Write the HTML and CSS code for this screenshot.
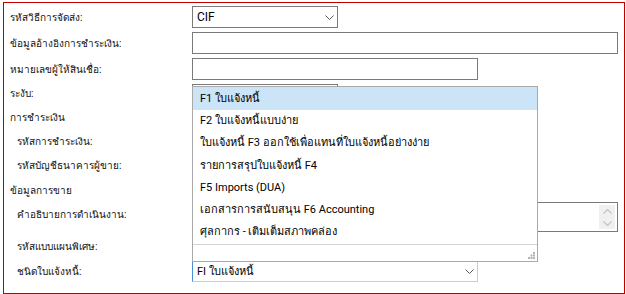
FILE: index.html
```html
<!DOCTYPE html>
<html lang="th">
<head>
    <meta charset="UTF-8">
    <title>Invoice settings</title>
    <link rel="stylesheet" href="styles.css">
</head>
<body>
    <div class="panel">
        <div class="form">
            <div class="lbl r1">รหัสวิธีการจัดส่ง:</div>
            <div class="ctl r1">
                <div class="select w-s"><span>CIF</span>
                    <svg class="chev" width="9" height="5" viewBox="0 0 9 5"><path d="M0.5 0.5 L4.5 4.5 L8.5 0.5" fill="none" stroke="#555" stroke-width="1"/></svg>
                </div>
            </div>

            <div class="lbl r1">ข้อมูลอ้างอิงการชำระเงิน:</div>
            <div class="ctl r1"><div class="input w-l"></div></div>

            <div class="lbl r1">หมายเลขผู้ให้สินเชื่อ:</div>
            <div class="ctl r1"><div class="input w-m"></div></div>

            <div class="lbl r2">ระงับ:</div>
            <div class="ctl r2 top"><div class="input w-s"></div></div>

            <div class="lbl head r3">การชำระเงิน</div>
            <div class="ctl r3"></div>

            <div class="lbl sub r3">รหัสการชำระเงิน:</div>
            <div class="ctl r3"></div>

            <div class="lbl sub r4">รหัสบัญชีธนาคารผู้ขาย:</div>
            <div class="ctl r4"></div>

            <div class="lbl head r3">ข้อมูลการขาย</div>
            <div class="ctl r3"></div>

            <div class="lbl sub r5 toplbl">คำอธิบายการดำเนินงาน:</div>
            <div class="ctl r5 top">
                <div class="textarea w-l">
                    <div class="spin">
                        <svg width="9" height="5" viewBox="0 0 9 5"><path d="M0.5 4.5 L4.5 0.5 L8.5 4.5" fill="none" stroke="#c4c4c4" stroke-width="1.2"/></svg>
                        <svg width="9" height="5" viewBox="0 0 9 5"><path d="M0.5 0.5 L4.5 4.5 L8.5 0.5" fill="none" stroke="#c4c4c4" stroke-width="1.2"/></svg>
                    </div>
                </div>
            </div>

            <div class="lbl sub r3">รหัสแบบแผนพิเศษ:</div>
            <div class="ctl r3"></div>

            <div class="lbl sub r1">ชนิดใบแจ้งหนี้:</div>
            <div class="ctl r1">
                <div class="select focus w-m"><span>FI ใบแจ้งหนี้</span>
                    <svg class="chev" width="9" height="5" viewBox="0 0 9 5"><path d="M0.5 0.5 L4.5 4.5 L8.5 0.5" fill="none" stroke="#555" stroke-width="1"/></svg>
                </div>
            </div>
        </div>

        <div class="dropdown">
            <ul class="options">
                <li class="selected">F1 ใบแจ้งหนี้</li>
                <li>F2 ใบแจ้งหนี้แบบง่าย</li>
                <li>ใบแจ้งหนี้ F3 ออกใช้เพื่อแทนที่ใบแจ้งหนี้อย่างง่าย</li>
                <li>รายการสรุปใบแจ้งหนี้ F4</li>
                <li>F5 Imports (DUA)</li>
                <li>เอกสารการสนับสนุน F6 Accounting</li>
                <li>ศุลกากร - เติมเต็มสภาพคล่อง</li>
            </ul>
            <div class="grip-bar">
                <svg width="7" height="7" viewBox="0 0 7 7" fill="#b4b4b4">
                    <rect x="5" y="0" width="2" height="2"/>
                    <rect x="2.5" y="2.5" width="2" height="2"/>
                    <rect x="5" y="2.5" width="2" height="2"/>
                    <rect x="0" y="5" width="2" height="2"/>
                    <rect x="2.5" y="5" width="2" height="2"/>
                    <rect x="5" y="5" width="2" height="2"/>
                </svg>
            </div>
        </div>
    </div>
</body>
</html>
```

FILE: styles.css
```css
body {
    margin: 0;
    padding: 0;
    background-color: #fff;
    font-family: Roboto, "Noto Sans", sans-serif;
    font-size: 10px;
    color: #000;
}
.panel {
    position: relative;
    margin: 2px 0 0 3px;
    width: 620px;
    height: 289px;
    border: 1px solid #c00000;
    padding-top: 1px;
    box-sizing: content-box;
}
.form {
    display: grid;
    grid-template-columns: 188px 1fr;
}
.r1 { height: 26px; }
.r2 { height: 23px; }
.r3 { height: 24px; }
.r4 { height: 25px; }
.r5 { height: 32px; }
.lbl {
    display: flex;
    align-items: center;
    padding-left: 6px;
    white-space: nowrap;
    color: #111;
}
.lbl.sub {
    padding-left: 13px;
}
.lbl.toplbl {
    align-items: flex-start;
    padding-top: 5px;
    box-sizing: border-box;
}
.ctl {
    display: flex;
    align-items: center;
}
.ctl.top {
    align-items: flex-start;
    padding-top: 2px;
    box-sizing: border-box;
}
.ctl.r5 {
    padding-top: 0;
}
.w-s { width: 146px; }
.w-m { width: 286px; }
.w-l { width: 426px; }
.input, .select, .textarea {
    height: 22px;
    border: 1px solid #7a7a7a;
    box-sizing: border-box;
    background: #fff;
}
.select {
    display: flex;
    align-items: center;
    justify-content: space-between;
    padding: 0 3px 0 4px;
    font-size: 12px;
}
.select.focus {
    font-size: 11px;
    border-color: #4a8fd0 #b6d1ea #b6d1ea #4a8fd0;
}
.chev {
    display: block;
}
.textarea {
    height: 30px;
    display: flex;
    justify-content: flex-end;
    padding: 2px;
}
.spin {
    width: 16px;
    background: #f0f0f0;
    display: flex;
    flex-direction: column;
    align-items: center;
    justify-content: space-around;
}
.dropdown {
    position: absolute;
    left: 188px;
    top: 83px;
    width: 346px;
    height: 176px;
    border: 1px solid #a9a9a9;
    background: #fff;
    box-sizing: border-box;
    display: flex;
    flex-direction: column;
}
.options {
    list-style: none;
    margin: 0;
    padding: 0;
    flex: 1;
    border-bottom: 1px solid #d4d4d4;
}
.options li {
    height: 22.3px;
    line-height: 22px;
    padding-left: 7px;
    white-space: nowrap;
    font-size: 11px;
}
.options li.selected {
    background: #cce4f7;
    height: 23px;
    line-height: 24px;
}
.grip-bar {
    height: 18px;
    display: flex;
    justify-content: flex-end;
    align-items: flex-end;
    padding: 0 2px 2px 0;
}
.grip-bar svg {
    display: block;
}
```
